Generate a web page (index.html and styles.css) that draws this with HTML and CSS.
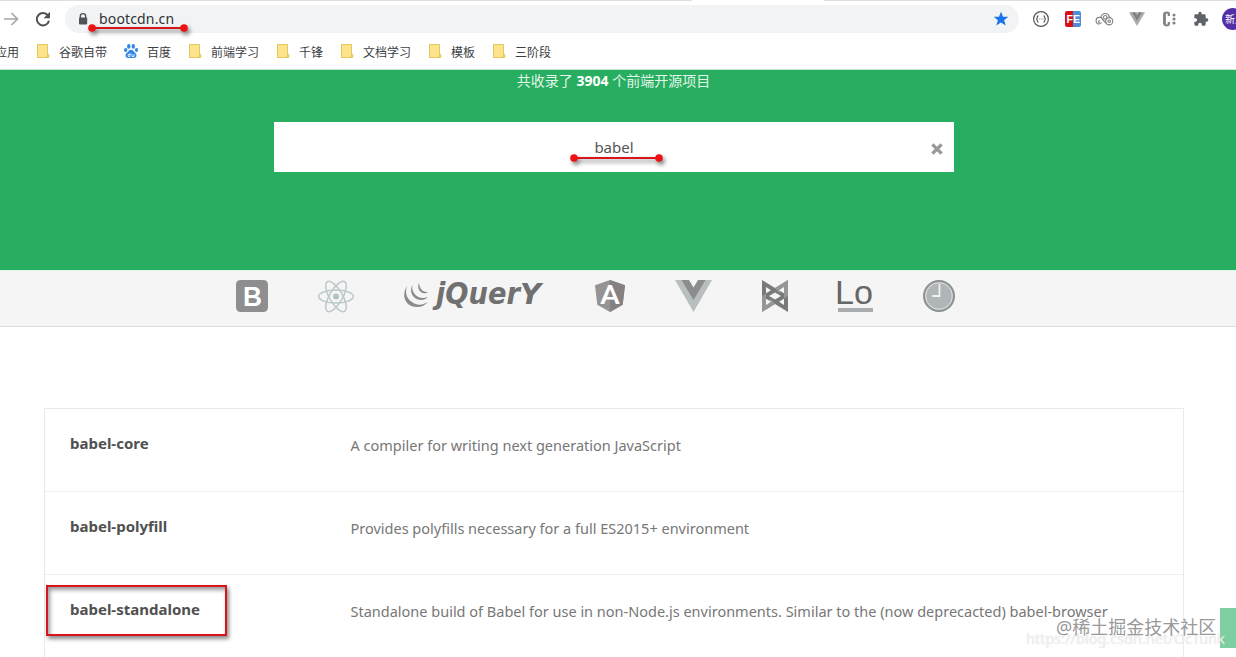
FILE: index.html
```
<!DOCTYPE html>
<html lang="zh-CN">
<head>
  <meta charset="UTF-8" />
  <meta name="viewport" content="width=device-width, initial-scale=1.0"/>
  <title>BootCDN</title>
  <link rel="stylesheet" href="styles.css">
</head>
<body>
  <svg class="defs" width="0" height="0">
    <symbol id="folder" viewBox="0 0 16 16">
      <path d="M2.5 1.5h10v9l1.300 1v3H2.500z" fill="#fde38c" stroke="#e5c75c"/>
      <path d="M12.500 10.500v4" stroke="#e5c75c"/>
    </symbol>
  </svg>

  <!-- Browser chrome -->
  <div class="tab-edge"><span></span></div>
  <div class="toolbar">
    <svg class="forward" width="16" height="16" viewBox="0 0 16 16" fill="none" stroke="#a6a8ab" stroke-width="1.700"><path d="M0 8h13M7.500 2l6 6-6 6"/></svg>
    <svg class="reload" width="16" height="16" viewBox="0 0 16 16"><path d="M13.200 4.800A6.200 6.200 0 1 0 14 9.700" fill="none" stroke="#4f5256" stroke-width="2"/><path d="M15 .8v6.400H8.600z" fill="#4f5256"/></svg>
    <div class="address">
      <svg width="10" height="12" viewBox="0 0 10 12"><path d="M2.300 5V3.300a2.700 2.700 0 0 1 5.400 0V5" fill="none" stroke="#505357" stroke-width="1.400"/><rect x="1" y="4.500" width="8.200" height="7" rx="1" fill="#505357"/></svg>
      <span class="url">bootcdn.cn
        <svg class="underline url-line" width="108" height="18" viewBox="0 0 108 18"><path d="M6 6h92" stroke="#d8151b" stroke-width="2"/><circle cx="6" cy="6" r="3.800" fill="#ee1111"/><circle cx="98" cy="6" r="3.800" fill="#ee1111"/></svg>
      </span>
      <svg class="star" width="16" height="16" viewBox="0 0 16 16"><path d="M8 .8l2 5h5.300l-4.200 3.400 1.600 5.300L8 11.400l-4.700 3.100 1.600-5.300L.7 5.800H6z" fill="#1a73e8"/></svg>
    </div>
    <div class="extensions">
      <svg width="16" height="16" viewBox="0 0 16 16"><circle cx="8" cy="8" r="7.400" fill="#fff" stroke="#555" stroke-width="1.200"/><path d="M5.500 4.800q-1.200 0-1.200 1.500T3.200 8q1.100.2 1.100 1.700t1.200 1.500M10.500 4.800q1.200 0 1.200 1.500T12.800 8q-1.100.2-1.100 1.700t-1.200 1.500" fill="none" stroke="#555" stroke-width="1.200"/><path d="M5.800 8h4.600" stroke="#888" stroke-dasharray="1 .8"/></svg>
      <svg width="16" height="16" viewBox="0 0 16 16"><path d="M2 0h7v16H2q-2 0-2-2V2q0-2 2-2z" fill="#d80f16"/><path d="M8 0h6q2 0 2 2v12q0 2-2 2H8z" fill="#4e8ddb"/><text x="1.500" y="12" class="fe-mark" textLength="13.500" lengthAdjust="spacingAndGlyphs">FE</text></svg>
      <svg width="18" height="16" viewBox="0 0 18 16" class="cloud" fill="none" stroke="#858585" stroke-width="1.200"><path d="M3.500 13.200A3.400 3.400 0 1 1 6.800 9M5 6.200a4.200 4.200 0 0 1 8.300-.3v1.200"/><circle cx="9.200" cy="6.300" r="1.800"/><circle cx="13.200" cy="10.200" r="3.600"/><circle cx="13.200" cy="10.200" r="1.200"/><path d="M4 9.500a1.400 1.400 0 1 0 1.400 1.800M6.500 8.500l4 4"/></svg>
      <svg width="16" height="16" viewBox="0 0 16 16"><path d="M0 1.300h16L8 15z" fill="#aaa"/><path d="M3 1.300h3L8 4.800l2-3.500h3L8 9.800z" fill="#808080"/></svg>
      <svg width="16" height="16" viewBox="0 0 16 16" fill="#858585"><path d="M9 5H6.700V3.600q0-1-.9-1t-.9 1v8.800q0 1 .9 1t.9-1V11H9v1.500q0 3-3.200 3T2 12.500v-9Q2 .5 5.800.5T9 3.500z"/><circle cx="13" cy="4" r="1.600"/><circle cx="13" cy="8" r="1.600"/><circle cx="13" cy="12" r="1.600"/></svg>
      <svg width="16" height="16" viewBox="0 0 24 24"><path d="M20.500 11H19V7a2 2 0 0 0-2-2h-4V3.500a2.500 2.500 0 0 0-5 0V5H4a2 2 0 0 0-2 2v3.800h1.500a2.700 2.700 0 0 1 0 5.400H2V20a2 2 0 0 0 2 2h3.800v-1.500a2.700 2.700 0 0 1 5.400 0V22H17a2 2 0 0 0 2-2v-4h1.500a2.500 2.500 0 0 0 0-5z" fill="#5f6368"/></svg>
    </div>
    <div class="avatar">新月</div>
  </div>

  <div class="bookmarks">
    <span class="bookmark">应用</span>
    <span class="bookmark"><svg width="16" height="16"><use href="#folder"/></svg>谷歌自带</span>
    <span class="bookmark"><svg width="16" height="16" viewBox="0 0 16 16" fill="#3385e8"><ellipse cx="5.800" cy="3.400" rx="1.700" ry="2.400"/><ellipse cx="10.300" cy="3.400" rx="1.700" ry="2.400"/><ellipse cx="2.700" cy="7" rx="1.700" ry="2.100"/><ellipse cx="13.500" cy="7" rx="1.600" ry="2.100"/><path d="M8 6.800c1.900 0 2.600 1.800 4 3 2.600 2.200 1.500 5.200-1 5.200H5c-2.600 0-3.500-3-1-5.200 1.400-1.200 2.200-3 4-3z"/><path d="M7 10v3.500H5.200v-2H7M9 11v2.500h2V11" fill="none" stroke="#fff" stroke-width=".8"/></svg>百度</span>
    <span class="bookmark"><svg width="16" height="16"><use href="#folder"/></svg>前端学习</span>
    <span class="bookmark"><svg width="16" height="16"><use href="#folder"/></svg>千锋</span>
    <span class="bookmark"><svg width="16" height="16"><use href="#folder"/></svg>文档学习</span>
    <span class="bookmark"><svg width="16" height="16"><use href="#folder"/></svg>模板</span>
    <span class="bookmark"><svg width="16" height="16"><use href="#folder"/></svg>三阶段</span>
  </div>

  <!-- Search header -->
  <header class="hero">
    <p class="stats">共收录了 <strong>3904</strong> 个前端开源项目</p>
    <div class="search">
      <span class="query">babel
        <svg class="underline query-line" width="106" height="18" viewBox="0 0 106 18"><path d="M6 6h85" stroke="#d8151b" stroke-width="2"/><circle cx="6" cy="6" r="3.800" fill="#ee1111"/><circle cx="91" cy="6" r="3.800" fill="#ee1111"/></svg>
      </span>
      <svg class="clear" width="12" height="12" viewBox="0 0 12 12"><path d="M2.600 2.600l6.800 6.800M9.400 2.600L2.600 9.400" stroke="#999" stroke-width="3.400" stroke-linecap="square"/></svg>
    </div>
  </header>

  <!-- Library logos -->
  <nav class="logos">
    <svg width="32" height="32" viewBox="0 0 32 32"><rect width="32" height="32" rx="4.500" fill="#8e8d90"/><text x="7" y="25.500" class="b-mark" textLength="19" lengthAdjust="spacingAndGlyphs">B</text></svg>
    <svg width="36" height="34" viewBox="0 0 36 34" fill="none" stroke="#bcc8ca" stroke-width="1.500"><ellipse cx="18" cy="16.500" rx="17.200" ry="6.500"/><ellipse cx="18" cy="16.500" rx="17.200" ry="6.500" transform="rotate(60 18 16.500)"/><ellipse cx="18" cy="16.500" rx="17.200" ry="6.500" transform="rotate(120 18 16.500)"/><circle cx="18" cy="16.500" r="3" fill="#b5c2c5" stroke="none"/></svg>
    <svg width="140" height="32" viewBox="0 0 140 32">
      <g fill="#8b8b8b">
        <path d="M3 6C-3 15 1 27 13 27c5 0 8-2 11-5-5 3-11 4-16 0C2 18 1 12 3 6z"/>
        <path d="M8.500 4.500C5 11 8 19 16 20c3.500.3 6-1 8-3-5 2-9.500 1-12.500-2-3-3-4-7-3-10.500z"/>
        <path d="M15 3c-2 4 0 9 4 10 2 .6 4 0 5-1-3 .3-5.500-.7-7-3-1-2-2-4-2-6z"/>
      </g>
      <text x="32" y="24" class="jquery-mark" textLength="84" lengthAdjust="spacingAndGlyphs">jQuer</text>
      <text x="116" y="24" class="jquery-mark jquery-tail" textLength="21" lengthAdjust="spacingAndGlyphs">Y</text>
    </svg>
    <svg width="31" height="32" viewBox="0 0 31 32"><path d="M16 0l15 5.200-2.300 19.600L16 32 3.300 24.800 1 5.200z" fill="#989393"/><path d="M16 0l15 5.200-2.300 19.600L16 32z" fill="#858183"/><text x="6" y="24" class="a-mark" textLength="20" lengthAdjust="spacingAndGlyphs">A</text></svg>
    <svg width="37" height="32" viewBox="0 0 37 32"><path d="M0 0h37L18.500 32z" fill="#b9bfbe"/><path d="M6.500 0h24l-12 20z" fill="#8a8c8d"/><path d="M14 0h9l-4.500 7.500z" fill="#f5f5f5"/></svg>
    <svg width="25" height="32" viewBox="0 0 25 32"><path d="M26 0L0 16v16l26-16z" fill="#939798"/><path d="M0 0l26 16v16L0 16z" fill="#777a7a"/><path d="M13 8l13-8v16l-4 2.500V10l-5 3z" fill="#939798"/><path d="M13 24L0 32V16l4-2.500V22l5-3z" fill="#939798"/><path d="M4 7l5 3.200-5 3zM22 7l-5 3.200 5 3zM4 25l5-3.200-5-3zM22 25l-5-3.200 5-3zM7 16l6-3.500 6 3.500-6 3.500z" fill="#f5f5f5"/></svg>
    <svg width="36" height="32" viewBox="0 0 36 32"><text x="-2" y="24" class="lo-mark" textLength="38" lengthAdjust="spacingAndGlyphs">Lo</text><path d="M1 28h35v4H1z" fill="#aaadb0"/></svg>
    <svg width="32" height="32" viewBox="0 0 32 32"><circle cx="16" cy="16" r="15" fill="#b0b5b7" stroke="#8d9192" stroke-width="2"/><circle cx="16" cy="16" r="13.300" fill="none" stroke="#dfe1e1"/><path d="M16.500 4v12H9" fill="none" stroke="#f1f1f1" stroke-width="1.800"/></svg>
  </nav>

  <!-- Search results -->
  <main class="results">
    <div class="package">
      <h4>babel-core</h4>
      <p>A compiler for writing next generation JavaScript</p>
    </div>
    <div class="package">
      <h4>babel-polyfill</h4>
      <p>Provides polyfills necessary for a full ES2015+ environment</p>
    </div>
    <div class="package">
      <h4>babel-standalone</h4>
      <p>Standalone build of Babel for use in non-Node.js environments. Similar to the (now deprecacted) babel-browser</p>
      <div class="highlight"></div>
    </div>
  </main>

  <div class="side-button"></div>
  <div class="watermark-url">https://blog.csdn.net/OcTunk</div>
  <div class="watermark">@稀土掘金技术社区</div>
</body>
</html>
```
FILE: styles.css
```
* {
  box-sizing: border-box;
}

body {
  margin: 0;
  height: 657px;
  overflow: hidden;
  position: relative;
  background: #fff;
  color: #555;
  font-family: "Noto Sans", "Noto Sans CJK SC", sans-serif;
}

svg {
  flex: none;
  overflow: visible;
}

.defs {
  position: absolute;
}

p, h4 {
  margin: 0;
}

/* Browser chrome */
.tab-edge {
  height: 5px;
  border-top: 1px solid #dedfe1;
}

.tab-edge span {
  display: block;
  width: 132px;
  height: 1px;
  margin: -1px 0 0 692px;
  background: #fff;
}

.toolbar {
  display: flex;
  align-items: center;
  height: 28px;
  padding-left: 4px;
}

.reload {
  margin-left: 15px;
}

.address {
  display: flex;
  flex: none;
  align-items: center;
  width: 954px;
  height: 28px;
  margin-left: 14px;
  padding: 0 10px 0 13px;
  border-radius: 14px;
  background: #f1f3f4;
}

.url {
  position: relative;
  margin-left: 11px;
  color: #303236;
  font-size: 14px;
  letter-spacing: 0.15px;
  line-height: 26px;
  white-space: nowrap;
}

.underline {
  position: absolute;
  filter: drop-shadow(2px 3px 2px rgba(0, 0, 0, 0.5));
}

.url-line {
  left: -13px;
  top: 16px;
}

.star {
  margin-left: auto;
}

.extensions {
  display: flex;
  flex: none;
  gap: 16px;
  margin-left: 14px;
}

.cloud {
  margin: 0 -1px;
}

.fe-mark {
  font: bold 10px "Liberation Sans", sans-serif;
  fill: #fff;
}

.avatar {
  flex: none;
  width: 22px;
  height: 22px;
  margin-left: 13px;
  padding-left: 3px;
  border-radius: 50%;
  background: #512da8;
  color: #fff;
  font-size: 10px;
  line-height: 22px;
  white-space: nowrap;
  overflow: hidden;
}

.bookmarks {
  display: flex;
  align-items: center;
  gap: 16px;
  height: 37px;
  margin-left: -5px;
  border-bottom: 1px solid #c8e6d6;
}

.bookmark {
  display: flex;
  align-items: center;
  gap: 8px;
  color: #3c4043;
  font-family: "Noto Sans CJK SC", sans-serif;
  font-size: 12px;
  white-space: nowrap;
}

/* Search header */
.hero {
  display: flex;
  flex-direction: column;
  align-items: center;
  height: 200px;
  padding-right: 9px;
  background: #27ae60;
}

.stats {
  height: 52px;
  color: #e3f5ea;
  font-size: 14px;
  line-height: 22px;
}

.stats strong {
  color: #fff;
}

.search {
  display: flex;
  align-items: center;
  justify-content: center;
  position: relative;
  width: 680px;
  height: 50px;
  margin-left: 1px;
  background: #fff;
}

.query {
  position: relative;
  font-size: 15px;
}

.query-line {
  left: -26px;
  top: 15px;
}

.clear {
  position: absolute;
  right: 11px;
  top: 21px;
}

/* Library logos */
.logos {
  display: flex;
  gap: 50px;
  height: 57px;
  padding: 9px 0 0 236px;
  border-top: 1px solid #e4f3ea;
  border-bottom: 1px solid #ddd;
  background: #f5f5f5;
}

.b-mark {
  font: bold 27px "Liberation Sans", sans-serif;
  fill: #fff;
}

.jquery-mark {
  font: italic bold 31px "DejaVu Sans", sans-serif;
  fill: #707070;
}

.jquery-tail {
  font-size: 29px;
}

.a-mark {
  font: 500 26px Roboto, sans-serif;
  fill: #fff;
}

.lo-mark {
  font: 34px "Liberation Sans", sans-serif;
  fill: #666;
}

/* Search results */
.results {
  width: 1140px;
  margin: 81px 0 0 44px;
  border: 1px solid #eaeaea;
  border-bottom: 0;
}

.package {
  display: grid;
  grid-template-columns: 280.5px 1fr;
  position: relative;
  height: 83px;
  padding: 22px 0 0 25px;
  border-bottom: 1px solid #eee;
}

.package:last-child {
  border-bottom: 0;
}

.package h4 {
  color: #505050;
  font-size: 15px;
  line-height: 24px;
}

.package p {
  padding-top: 2px;
  color: #777;
  font-size: 14.5px;
  line-height: 24px;
  white-space: nowrap;
}

.highlight {
  position: absolute;
  left: 1px;
  top: 10px;
  width: 181px;
  height: 51px;
  border: 2px solid #d8151b;
  box-shadow: 2px 3px 4px rgba(0, 0, 0, 0.45), inset 2px 3px 4px rgba(0, 0, 0, 0.4);
}

.side-button {
  position: absolute;
  right: 0;
  top: 608px;
  width: 16px;
  height: 40px;
  background: #7dcea0;
}

/* Watermarks */
.watermark,
.watermark-url {
  position: absolute;
  white-space: nowrap;
}

.watermark {
  left: 1056px;
  top: 614px;
  color: #999;
  font-size: 18px;
  line-height: 26px;
}

.watermark-url {
  left: 1026px;
  top: 627px;
  color: rgba(255, 255, 255, 0.7);
  font-size: 14.5px;
  line-height: 22px;
  text-shadow: 0 0 1px #ccc;
}
```
